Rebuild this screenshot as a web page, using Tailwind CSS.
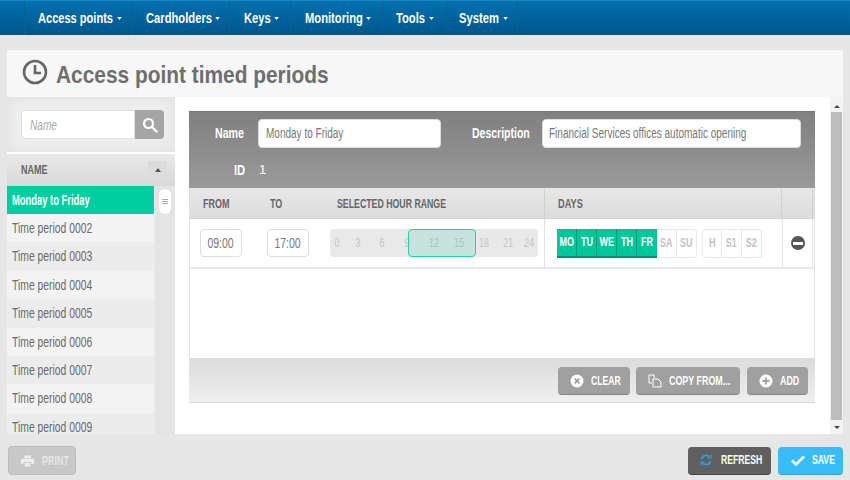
<!DOCTYPE html>
<html lang="en">

<head>
    <meta charset="UTF-8">
    <title>Access point timed periods</title>
    <script src="https://cdn.jsdelivr.net/npm/@tailwindcss/browser@4"></script>
</head>

<body class="w-[850px] h-[480px] overflow-hidden bg-[#e6e6e6] font-['Liberation_Sans',sans-serif] text-[#666]">
    <!-- top menu: the original face is condensed, so text gets a fixed box and a horizontal squeeze -->
    <nav class="h-[35px] flex pl-6 border-t border-[#1a86c0] bg-gradient-to-b from-[#0470ae] to-[#00568c] text-white text-[14px] font-bold whitespace-nowrap">
        <div class="w-[108px] flex items-center pl-[13px] gap-[5px] border-x border-[#0a5f94]">
            <span class="w-[74px] origin-left scale-x-[.79]">Access points</span>
            <svg class="w-[5px] h-[3px] shrink-0" viewBox="0 0 6 4" fill="#fff"><path d="M0 0h6L3 4z"/></svg>
        </div>
        <div class="w-[98px] flex items-center pl-[14px] gap-[5px] border-r border-[#0a5f94]">
            <span class="w-[64px] origin-left scale-x-[.8]">Cardholders</span>
            <svg class="w-[5px] h-[3px] shrink-0" viewBox="0 0 6 4" fill="#fff"><path d="M0 0h6L3 4z"/></svg>
        </div>
        <div class="w-[61px] flex items-center pl-[14px] gap-[5px] border-r border-[#0a5f94]">
            <span class="w-[25px] origin-left scale-x-[.8]">Keys</span>
            <svg class="w-[5px] h-[3px] shrink-0" viewBox="0 0 6 4" fill="#fff"><path d="M0 0h6L3 4z"/></svg>
        </div>
        <div class="w-[92px] flex items-center pl-[14px] gap-[5px] border-r border-[#0a5f94]">
            <span class="w-[56px] origin-left scale-x-[.8]">Monitoring</span>
            <svg class="w-[5px] h-[3px] shrink-0" viewBox="0 0 6 4" fill="#fff"><path d="M0 0h6L3 4z"/></svg>
        </div>
        <div class="w-[64px] flex items-center pl-[13px] gap-[5px] border-r border-[#0a5f94]">
            <span class="w-[28px] origin-left scale-x-[.8]">Tools</span>
            <svg class="w-[5px] h-[3px] shrink-0" viewBox="0 0 6 4" fill="#fff"><path d="M0 0h6L3 4z"/></svg>
        </div>
        <div class="w-[71px] flex items-center pl-[12px] gap-[5px] border-r border-[#0a5f94]">
            <span class="w-[39px] origin-left scale-x-[.8]">System</span>
            <svg class="w-[5px] h-[3px] shrink-0" viewBox="0 0 6 4" fill="#fff"><path d="M0 0h6L3 4z"/></svg>
        </div>
    </nav>

    <main class="ml-[7px] mt-[15px] w-[836px]">
        <header class="h-[47px] bg-[#f7f7f7] flex items-center pl-[15px] gap-[8px]">
            <svg class="w-[26px] h-[26px] -mt-[3px] shrink-0" viewBox="0 0 26 26" fill="none" stroke="#666" stroke-width="2.600">
                <circle cx="13" cy="13" r="11"/>
                <path d="M13 6v8h6"/>
            </svg>
            <h1 class="w-[272px] pt-[2px] text-[24px] font-bold whitespace-nowrap text-[#6e6e6e] origin-left scale-x-[.87]">Access point timed periods</h1>
        </header>

        <div class="flex h-[337px] bg-white">
            <!-- list column -->
            <aside class="w-[168px] flex flex-col bg-[#ececec] overflow-hidden">
                <div class="h-[57px] shrink-0 flex items-center pl-[14px] border-b-2 border-white bg-[#eeeeee] shadow-[inset_0_0_14px_#dedede]">
                    <div class="w-[114px] h-[29px] pl-2 pt-[2px] flex items-center bg-white rounded-l border border-[#ddd] text-[14px] italic text-[#aaa]">
                        <span class="origin-left scale-x-[.72]">Name</span>
                    </div>
                    <div class="w-[29px] h-[29px] flex items-center justify-center bg-[#a5a5a5] rounded-r">
                        <svg class="w-[16px] h-[16px]" viewBox="0 0 16 16" fill="none" stroke="#fff" stroke-width="2.200">
                            <circle cx="6.500" cy="6.500" r="4.500"/>
                            <path d="M10 10l4.500 4.500" stroke-linecap="round"/>
                        </svg>
                    </div>
                </div>
                <div class="h-[32px] shrink-0 flex items-center justify-between pl-[14px] pr-[8px] bg-gradient-to-b from-[#e9e9e9] to-[#d9d9d9] text-[12px] font-bold text-[#666]">
                    <span class="origin-left scale-x-[.75]">NAME</span>
                    <span class="w-[19px] h-[19px] flex items-center justify-center bg-[#dcdcdc]">
                        <svg class="w-[6px] h-[4px]" viewBox="0 0 6 4" fill="#555"><path d="M3 0l3 4H0z"/></svg>
                    </span>
                </div>
                <div class="flex flex-1 min-h-0">
                    <ul class="w-[147px] text-[14px] text-[#6a6a6a] overflow-hidden whitespace-nowrap">
                        <li class="h-[28px] leading-[28px] pl-[5px] bg-[#00cea1] text-white font-bold"><span class="block origin-left scale-x-[.67]">Monday to Friday</span></li>
                        <li class="h-[28.4px] leading-[28px] pl-[5px] bg-[#f3f3f3]"><span class="block origin-left scale-x-[.74]">Time period 0002</span></li>
                        <li class="h-[28.4px] leading-[28px] pl-[5px] bg-[#ececec]"><span class="block origin-left scale-x-[.74]">Time period 0003</span></li>
                        <li class="h-[28.4px] leading-[28px] pl-[5px] bg-[#f3f3f3]"><span class="block origin-left scale-x-[.74]">Time period 0004</span></li>
                        <li class="h-[28.4px] leading-[28px] pl-[5px] bg-[#ececec]"><span class="block origin-left scale-x-[.74]">Time period 0005</span></li>
                        <li class="h-[28.4px] leading-[28px] pl-[5px] bg-[#f3f3f3]"><span class="block origin-left scale-x-[.74]">Time period 0006</span></li>
                        <li class="h-[28.4px] leading-[28px] pl-[5px] bg-[#ececec]"><span class="block origin-left scale-x-[.74]">Time period 0007</span></li>
                        <li class="h-[28.4px] leading-[28px] pl-[5px] bg-[#f3f3f3]"><span class="block origin-left scale-x-[.74]">Time period 0008</span></li>
                        <li class="h-[28.4px] leading-[28px] pl-[5px] bg-[#ececec]"><span class="block origin-left scale-x-[.74]">Time period 0009</span></li>
                    </ul>
                    <div class="w-[20px] ml-px bg-[#e4e4e4] flex justify-center">
                        <div class="w-[12px] h-[25px] mt-[3px] rounded-full bg-white flex flex-col items-center justify-center gap-px">
                            <span class="w-[6px] h-px bg-[#aaa]"></span>
                            <span class="w-[6px] h-px bg-[#aaa]"></span>
                            <span class="w-[6px] h-px bg-[#aaa]"></span>
                        </div>
                    </div>
                </div>
            </aside>

            <!-- detail -->
            <section class="w-[655px] pl-[14px] pt-[14px]">
                <div class="w-[626px]">
                    <div class="h-[77px] border-t border-[#777] bg-gradient-to-b from-[#808080] to-[#9a9a9a] text-white font-bold text-[14px] whitespace-nowrap pt-[7px]">
                        <div class="flex items-center h-[28px]">
                            <span class="ml-[26px] w-[29px] origin-left scale-x-[.76]">Name</span>
                            <div class="ml-[14px] w-[183px] h-[29px] pl-[7px] flex items-center bg-white rounded border border-[#ddd] text-[14px] font-normal text-[#777]">
                                <span class="origin-left scale-x-[.715]">Monday to Friday</span>
                            </div>
                            <span class="ml-[31px] w-[56px] origin-left scale-x-[.75]">Description</span>
                            <div class="ml-[14px] w-[259px] h-[29px] pl-[6px] flex items-center bg-white rounded border border-[#ddd] text-[14px] font-normal text-[#777]">
                                <span class="origin-left scale-x-[.715]">Financial Services offices automatic opening</span>
                            </div>
                        </div>
                        <div class="flex items-center h-[22px] mt-[12px]">
                            <span class="ml-[45px] w-[10px] origin-left scale-x-[.8]">ID</span>
                            <span class="ml-[15px] font-normal text-[13px]">1</span>
                        </div>
                    </div>

                    <div class="flex h-[31px] pt-px bg-gradient-to-b from-[#e8e8e8] to-[#dcdcdc] border-b border-[#d4d4d4] border-x border-x-[#ddd] text-[12px] font-bold text-[#666] whitespace-nowrap items-center">
                        <span class="w-[67px] pl-[13px]"><span class="block origin-left scale-x-[.75]">FROM</span></span>
                        <span class="w-[67px] pl-[13px]"><span class="block origin-left scale-x-[.75]">TO</span></span>
                        <span class="w-[221px] pl-[13px] h-full flex items-center border-r border-[#cfcfcf]"><span class="origin-left scale-x-[.73]">SELECTED HOUR RANGE</span></span>
                        <span class="w-[237px] pl-[13px] h-full flex items-center border-r border-[#cfcfcf]"><span class="origin-left scale-x-[.77]">DAYS</span></span>
                        <span class="w-[31px] h-full border-r border-[#cfcfcf]"></span>
                    </div>

                    <div class="flex h-[50px] items-center border-x border-[#e2e2e2] border-b-2 border-b-[#e8e8e8] text-[#777]">
                        <div class="w-[67px] pl-[10px]">
                            <div class="w-[42px] h-[28px] flex items-center justify-center rounded border border-[#ddd] text-[14px]"><span class="scale-x-[.75]">09:00</span></div>
                        </div>
                        <div class="w-[73px] pl-[10px]">
                            <div class="w-[42px] h-[28px] flex items-center justify-center rounded border border-[#ddd] text-[14px]"><span class="scale-x-[.75]">17:00</span></div>
                        </div>
                        <div class="relative w-[208px] h-[28px] flex items-center rounded bg-[#e9e9e9] text-[12px] text-[#c4c4c4] text-center">
                            <span class="w-[14px] scale-x-[.75]">0</span>
                            <span class="w-[28px] scale-x-[.75]">3</span>
                            <span class="w-[20px] scale-x-[.75]">6</span>
                            <span class="w-[30px] scale-x-[.75]">9</span>
                            <span class="w-[24px] scale-x-[.75]">12</span>
                            <span class="w-[26px] scale-x-[.75]">15</span>
                            <span class="w-[24px] scale-x-[.75]">18</span>
                            <span class="w-[24px] scale-x-[.75]">21</span>
                            <span class="w-[18px] scale-x-[.75]">24</span>
                            <div class="absolute left-[78px] top-0 w-[68px] h-[28px] rounded-sm border border-[#22d3a8] bg-[#00c79b]/15"></div>
                        </div>
                        <div class="w-[7px] h-full border-r border-[#e2e2e2]"></div>
                        <div class="w-[237px] h-full flex items-center pl-[12px] text-[12px] font-bold text-[#c2c2c2]">
                            <div class="flex h-[29px]">
                                <span class="w-[20px] flex items-center justify-center bg-[#00c79b] border-b-2 border-[#008f70] border-r border-r-[#009b78] text-white"><span class="scale-x-[.75]">MO</span></span>
                                <span class="w-[20px] flex items-center justify-center bg-[#00c79b] border-b-2 border-[#008f70] border-r border-r-[#009b78] text-white"><span class="scale-x-[.75]">TU</span></span>
                                <span class="w-[20px] flex items-center justify-center bg-[#00c79b] border-b-2 border-[#008f70] border-r border-r-[#009b78] text-white"><span class="scale-x-[.75]">WE</span></span>
                                <span class="w-[20px] flex items-center justify-center bg-[#00c79b] border-b-2 border-[#008f70] border-r border-r-[#009b78] text-white"><span class="scale-x-[.75]">TH</span></span>
                                <span class="w-[20px] flex items-center justify-center bg-[#00c79b] border-b-2 border-[#008f70] text-white"><span class="scale-x-[.75]">FR</span></span>
                                <span class="w-[20px] flex items-center justify-center border border-l-0 border-[#e8e8e8]"><span class="scale-x-[.75]">SA</span></span>
                                <span class="w-[20px] flex items-center justify-center border border-l-0 border-[#e8e8e8] rounded-r"><span class="scale-x-[.75]">SU</span></span>
                            </div>
                            <div class="flex h-[29px] ml-[5px]">
                                <span class="w-[20px] flex items-center justify-center border border-[#e8e8e8] rounded-l"><span class="scale-x-[.75]">H</span></span>
                                <span class="w-[20px] flex items-center justify-center border border-l-0 border-[#e8e8e8]"><span class="scale-x-[.75]">S1</span></span>
                                <span class="w-[20px] flex items-center justify-center border border-l-0 border-[#e8e8e8] rounded-r"><span class="scale-x-[.75]">S2</span></span>
                            </div>
                        </div>
                        <div class="w-[31px] h-full flex items-center justify-center border-x border-[#e2e2e2]">
                            <span class="w-[14px] h-[14px] rounded-full bg-[#555] flex items-center justify-center">
                                <span class="w-[10px] h-[3px] bg-white"></span>
                            </span>
                        </div>
                    </div>

                    <div class="h-[91px] border-x border-[#e2e2e2] border-b-2 border-b-[#ddd]"></div>

                    <div class="h-[43px] flex items-center justify-end gap-[6px] pr-[7px] bg-gradient-to-b from-[#dcdcdc] to-[#efefef] border-b border-[#d8d8d8] text-white text-[13px] font-bold whitespace-nowrap">
                        <button class="h-[28px] w-[72px] flex items-center pl-[12px] gap-[7px] rounded bg-[#a0a0a0] border-b border-[#888]">
                            <svg class="w-[14px] h-[14px] shrink-0" viewBox="0 0 14 14">
                                <circle cx="7" cy="7" r="6.500" fill="#fff"/>
                                <path d="M4.700 4.700l4.600 4.600M9.300 4.700l-4.600 4.600" stroke="#a0a0a0" stroke-width="1.800"/>
                            </svg>
                            <span class="origin-left scale-x-[.665]">CLEAR</span>
                        </button>
                        <button class="h-[28px] w-[104px] flex items-center pl-[12px] gap-[7px] rounded bg-[#a0a0a0] border-b border-[#888]">
                            <svg class="w-[14px] h-[14px] shrink-0" viewBox="0 0 14 14" fill="none" stroke="#fff" stroke-width="1">
                                <path d="M1 1h5v3M1 1v8h3"/>
                                <path d="M5 5h5l3 3v5H5z"/>
                            </svg>
                            <span class="origin-left scale-x-[.685]">COPY FROM...</span>
                        </button>
                        <button class="ml-px h-[28px] w-[61px] flex items-center pl-[12px] gap-[7px] rounded bg-[#a0a0a0] border-b border-[#888]">
                            <svg class="w-[14px] h-[14px] shrink-0" viewBox="0 0 14 14">
                                <circle cx="7" cy="7" r="6.500" fill="#fff"/>
                                <path d="M3.500 7h7M7 3.500v7" stroke="#a0a0a0" stroke-width="1.800"/>
                            </svg>
                            <span class="origin-left scale-x-[.685]">ADD</span>
                        </button>
                    </div>
                </div>
            </section>

            <!-- page scrollbar -->
            <div class="w-[13px] bg-[#f3f3f3] flex flex-col items-center">
                <div class="h-[15px] w-full flex justify-center pt-[8px]">
                    <svg class="w-[6px] h-[3px]" viewBox="0 0 6 3" fill="#444"><path d="M3 0l3 3H0z"/></svg>
                </div>
                <div class="w-[11px] flex-1 bg-[#bdbdbd]"></div>
                <div class="h-[14px] w-full flex justify-center pt-[6px]">
                    <svg class="w-[6px] h-[3px]" viewBox="0 0 6 3" fill="#444"><path d="M0 0h6L3 3z"/></svg>
                </div>
            </div>
        </div>

        <footer class="mt-[12px] flex items-center text-white text-[13px] font-bold whitespace-nowrap">
            <button class="ml-px h-[29px] w-[68px] flex items-center pl-[12px] gap-[8px] rounded bg-[#c8c8c8] border border-[#bdbdbd] text-[#e6e6e6]">
                <svg class="w-[13px] h-[12px] shrink-0" viewBox="0 0 14 12" fill="#eee">
                    <path d="M3.500 0h7v3h-7zM1 3.500h12a1 1 0 0 1 1 1V9h-3V7H3v2H0V4.500a1 1 0 0 1 1-1zM4 8h6v4H4z"/>
                </svg>
                <span class="origin-left scale-x-[.69]">PRINT</span>
            </button>
            <button class="ml-auto h-[28px] w-[83px] flex items-center pl-[12px] gap-[9px] rounded bg-[#5f5f5f] border-b border-[#444]">
                <svg class="w-[12px] h-[12px] shrink-0" viewBox="0 0 12 12" fill="none" stroke="#2f9fe0" stroke-width="1.800">
                    <path d="M1.500 5a4.600 4.600 0 0 1 8-2M10.500 7a4.600 4.600 0 0 1-8 2"/>
                    <path d="M10.800 0.500v3.500H7.300M1.200 11.500V8h3.500" stroke-width="1.200"/>
                </svg>
                <span class="origin-left scale-x-[.665]">REFRESH</span>
            </button>
            <button class="ml-[7px] h-[28px] w-[65px] flex items-center pl-[13px] gap-[7px] rounded bg-[#38bdfb] border-b border-[#2aa5e0]">
                <svg class="w-[14px] h-[11px] shrink-0" viewBox="0 0 14 11" fill="none" stroke="#fff" stroke-width="2.600">
                    <path d="M1 5.500l4 4 8-8"/>
                </svg>
                <span class="origin-left scale-x-[.665]">SAVE</span>
            </button>
        </footer>
    </main>
</body>

</html>
